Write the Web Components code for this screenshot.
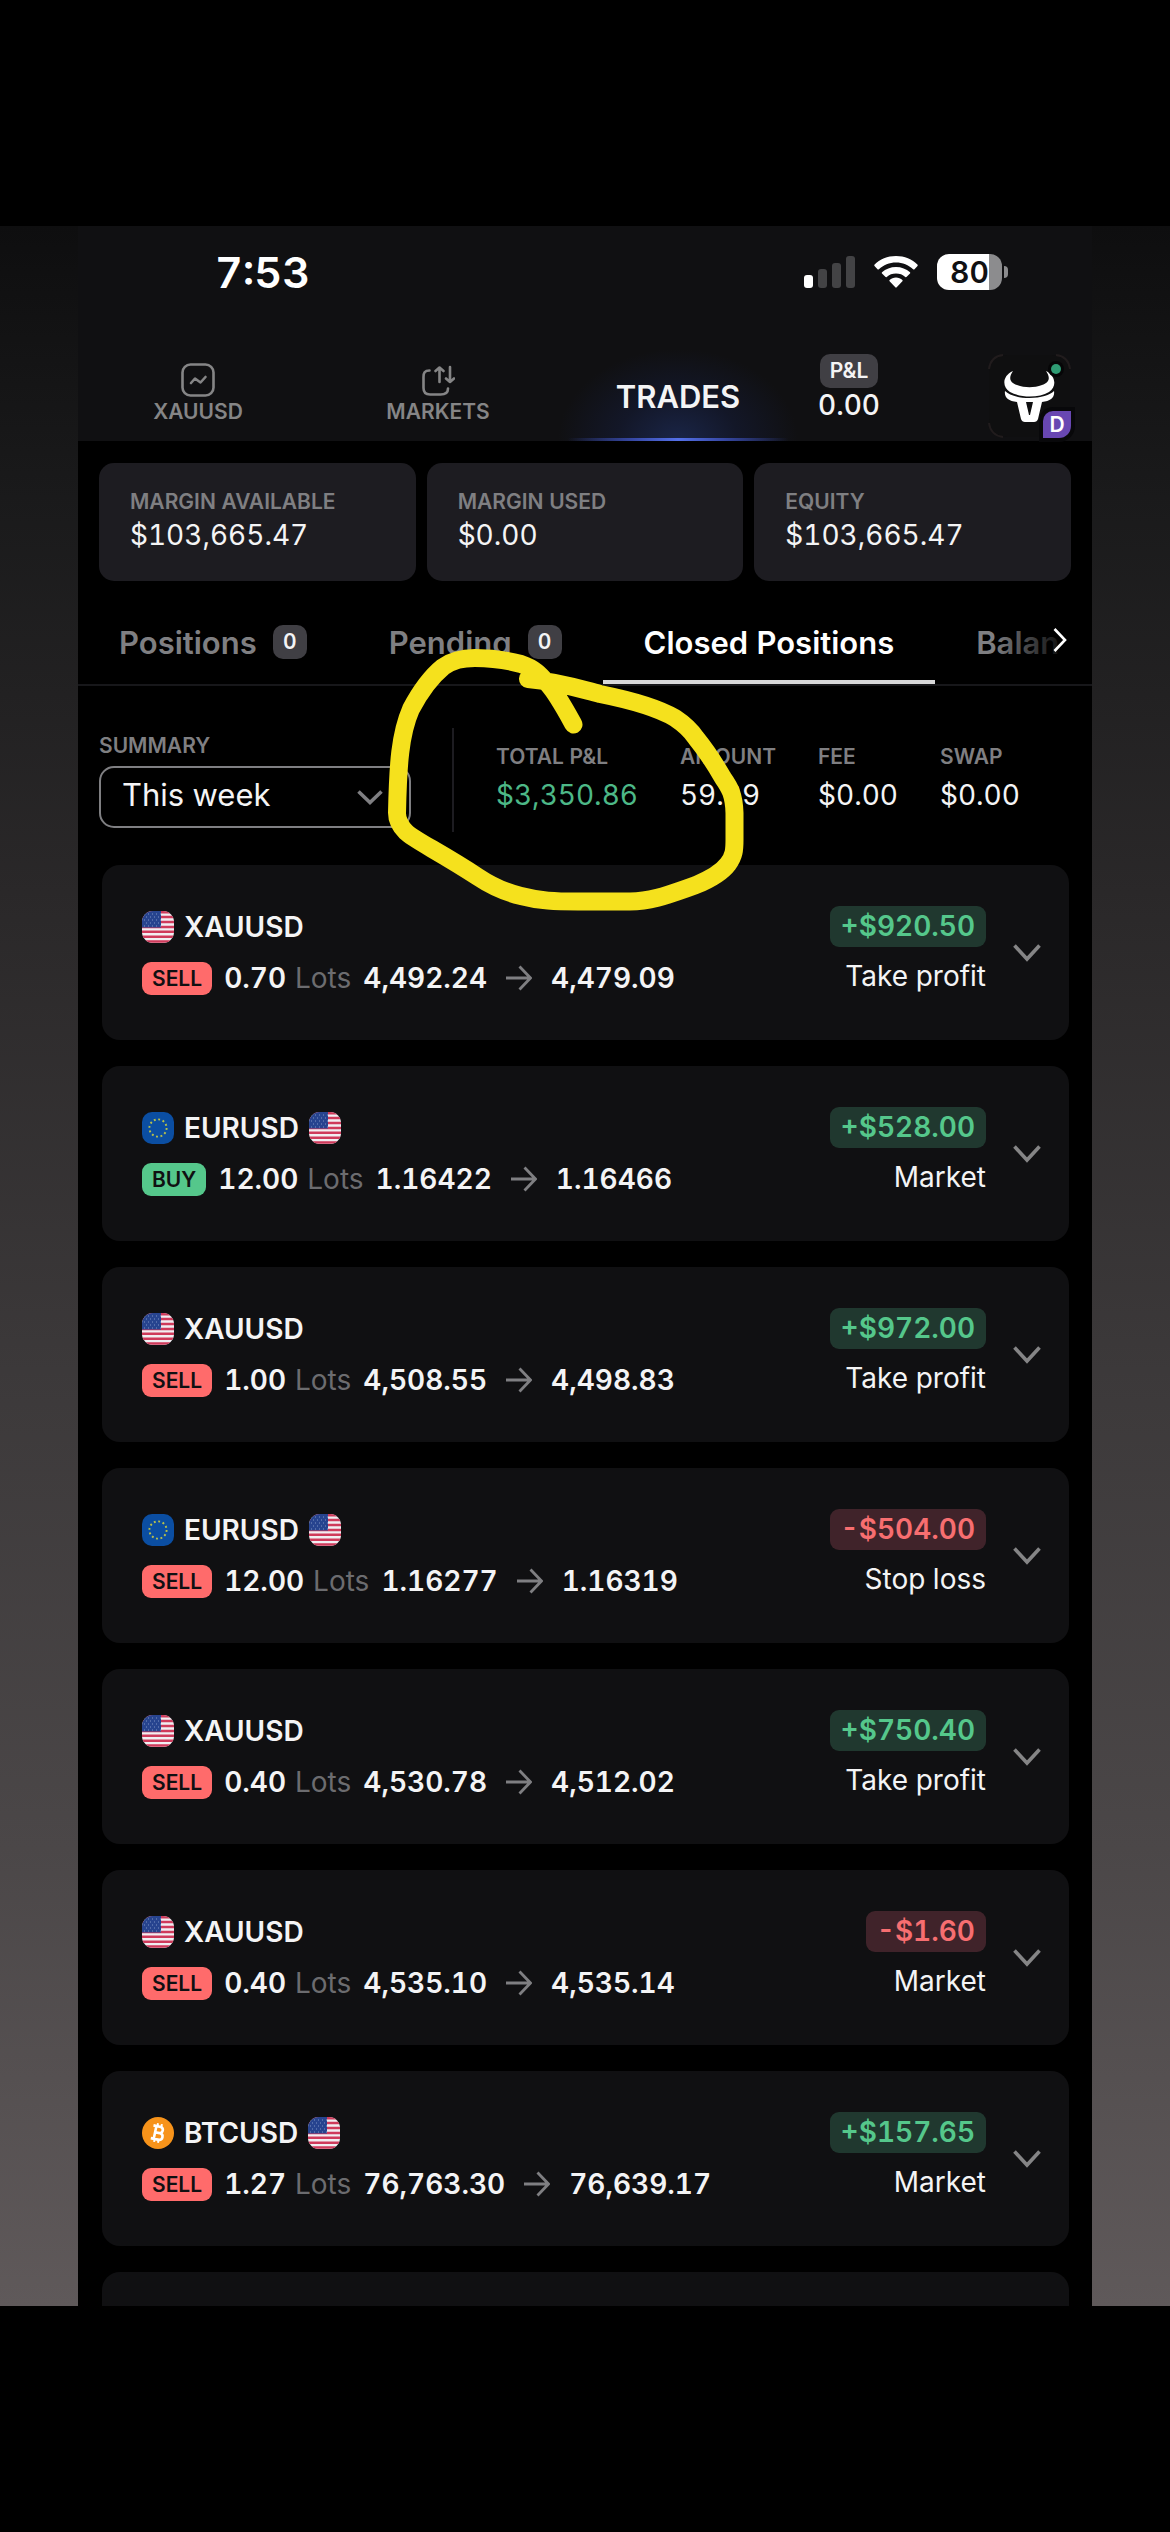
<!DOCTYPE html>
<html lang="en">
<head>
<meta charset="utf-8">
<meta name="viewport" content="width=device-width, initial-scale=1">
<title>Trades</title>
<style>
    body {
        margin: 0;
        background: #000;
        color: #f4f4f5;
        font-family: Inter, "Liberation Sans", sans-serif;
        font-variant-numeric: tabular-nums;
    }
</style>
</head>
<body>
<trades-screen>
    <status-bar slot="top" time="7:53" battery="80"></status-bar>
    <main-nav slot="top"></main-nav>

    <account-stats>
        <stat-item boxed label="MARGIN AVAILABLE">$103,665.47</stat-item>
        <stat-item boxed label="MARGIN USED">$0.00</stat-item>
        <stat-item boxed label="EQUITY">$103,665.47</stat-item>
    </account-stats>

    <tab-strip>
        <tab-item count="0">Positions</tab-item>
        <tab-item count="0">Pending</tab-item>
        <tab-item selected>Closed Positions</tab-item>
        <tab-item>Balan</tab-item>
    </tab-strip>

    <period-summary>
        <stat-item label="TOTAL P&amp;L" tone="up">$3,350.86</stat-item>
        <stat-item label="AMOUNT">59.89</stat-item>
        <stat-item label="FEE">$0.00</stat-item>
        <stat-item label="SWAP">$0.00</stat-item>
    </period-summary>

    <trade-list></trade-list>

    <pen-circle slot="overlay"></pen-circle>
</trades-screen>

<script>
const FLAGS = {
    us: `<svg viewBox="0 0 32 32">
            <clipPath id="c"><rect width="32" height="32" rx="11"/></clipPath>
            <g clip-path="url(#c)">
                <rect width="32" height="32" fill="#f1eef2"/>
                <path d="M0 1.2H32M0 6.1H32M0 11H32M0 15.9H32M0 20.8H32M0 25.7H32M0 30.6H32" stroke="#cf3a5b" stroke-width="2.5"/>
                <rect width="19" height="16.5" fill="#27448f"/>
                <path d="M2 3H19M4 6H19M2 9H19M4 12H19M2 15H19" stroke="#7f93c4" stroke-width="1" stroke-dasharray="1 3"/>
            </g>
        </svg>`,
    eu: `<svg viewBox="0 0 32 32">
            <rect width="32" height="32" rx="10" fill="#0b4ea2"/>
            <circle cx="16" cy="16" r="8.6" fill="none" stroke="#b9c24a" stroke-width="1.9" stroke-dasharray="1.9 2.6"/>
        </svg>`,
    btc: `<svg viewBox="0 0 32 32">
            <circle cx="16" cy="16" r="16" fill="#f7931a"/>
            <g transform="rotate(12 16 16)" fill="none" stroke="#fff" stroke-width="2.6">
                <path d="M10 9.5H17.5A3.2 3.2 0 0 1 17.5 15.8H13M13 15.8H18.4A3.4 3.4 0 0 1 18.4 22.5H10M13 9V23"/>
                <path d="M14 6.5V9.5M18 6.5V9.5M14 22.5V25.5M18 22.5V25.5" stroke-width="2"/>
            </g>
        </svg>`
};

const TRADES = [
    { from: "us", symbol: "XAUUSD", side: "SELL", lots: "0.70", open: "4,492.24", close: "4,479.09", pnl: "+$920.50", reason: "Take profit" },
    { from: "eu", symbol: "EURUSD", to: "us", side: "BUY", lots: "12.00", open: "1.16422", close: "1.16466", pnl: "+$528.00", reason: "Market" },
    { from: "us", symbol: "XAUUSD", side: "SELL", lots: "1.00", open: "4,508.55", close: "4,498.83", pnl: "+$972.00", reason: "Take profit" },
    { from: "eu", symbol: "EURUSD", to: "us", side: "SELL", lots: "12.00", open: "1.16277", close: "1.16319", pnl: "-$504.00", reason: "Stop loss" },
    { from: "us", symbol: "XAUUSD", side: "SELL", lots: "0.40", open: "4,530.78", close: "4,512.02", pnl: "+$750.40", reason: "Take profit" },
    { from: "us", symbol: "XAUUSD", side: "SELL", lots: "0.40", open: "4,535.10", close: "4,535.14", pnl: "-$1.60", reason: "Market" },
    { from: "btc", symbol: "BTCUSD", to: "us", side: "SELL", lots: "1.27", open: "76,763.30", close: "76,639.17", pnl: "+$157.65", reason: "Market" }
];

class TradesScreen extends HTMLElement {
    constructor() {
        super();
        this.attachShadow({ mode: "open" }).innerHTML = `
            <style>
                :host {
                    display: block;
                    box-sizing: border-box;
                    height: 100vh;
                    padding: 226px 0;
                    overflow: hidden;
                }
                .stage {
                    height: 100%;
                    box-sizing: border-box;
                    padding: 0 78px;
                    background: linear-gradient(#0e0e0f 0%, #1a1a1b 13%, #2a2829 32%, #3c393a 55%, #4b4748 78%, #5f595a 100%);
                }
                .app {
                    position: relative;
                    height: 100%;
                    background: #000;
                }
                .clip {
                    height: 100%;
                    overflow: hidden;
                }
                header {
                    background: #101012;
                }
            </style>
            <div class="stage">
                <div class="app">
                    <div class="clip">
                        <header><slot name="top"></slot></header>
                        <main><slot></slot></main>
                    </div>
                    <slot name="overlay"></slot>
                </div>
            </div>
        `;
    }
}

class StatusBar extends HTMLElement {
    constructor() {
        super();
        this.attachShadow({ mode: "open" }).innerHTML = `
            <style>
                :host {
                    display: flex;
                    justify-content: space-between;
                    align-items: center;
                    height: 92px;
                    padding: 0 84px 0 137px;
                }
                .time {
                    font-size: 43px;
                    font-weight: 600;
                    color: #fff;
                }
                .icons {
                    display: flex;
                    align-items: center;
                    gap: 19px;
                }
                svg {
                    display: block;
                }
                .battery {
                    display: flex;
                    align-items: center;
                    gap: 2px;
                }
                .level {
                    width: 65px;
                    height: 36px;
                    line-height: 37px;
                    border-radius: 12px;
                    background: linear-gradient(90deg, #fff 80%, #8c8c8e 80%);
                    color: #101012;
                    font-size: 30px;
                    font-weight: 600;
                    text-align: center;
                }
                .nub {
                    width: 4px;
                    height: 12px;
                    border-radius: 0 4px 4px 0;
                    background: #8c8c8e;
                }
            </style>
            <div class="time"></div>
            <div class="icons">
                <svg width="51" height="32" viewBox="0 0 51 32">
                    <rect y="19" width="9" height="13" rx="3" fill="#fff"/>
                    <g fill="#434345">
                        <rect x="14" y="13" width="9" height="19" rx="3"/>
                        <rect x="28" y="7" width="9" height="25" rx="3"/>
                        <rect x="42" width="9" height="32" rx="3"/>
                    </g>
                </svg>
                <svg width="44" height="32" viewBox="0 0 44 32" fill="#fff">
                    <path d="M22 0C13.500 0 5.800 3.400 0.400 8.700Q0 9.300 0.500 9.900L3.500 13.200Q4.200 13.800 4.900 13.200C9.400 9 15.400 6.500 22 6.500S34.600 9 39.100 13.200Q39.800 13.800 40.500 13.200L43.500 9.900Q44 9.300 43.600 8.700C38.200 3.400 30.500 0 22 0Z"/>
                    <path d="M22 11C16.600 11 11.700 13 8 16.300Q7.400 17 8 17.600L11.300 20.800Q12 21.400 12.700 20.900C15.200 18.700 18.400 17.500 22 17.500S28.800 18.700 31.300 20.900Q32 21.400 32.700 20.800L36 17.600Q36.600 17 36 16.300C32.300 13 27.400 11 22 11Z"/>
                    <path d="M22 21.500C19.500 21.500 17.300 22.400 15.600 23.900Q15 24.600 15.600 25.200L21.300 31.300Q22 32 22.700 31.300L28.400 25.200Q29 24.600 28.400 23.900C26.700 22.400 24.500 21.500 22 21.500Z"/>
                </svg>
                <div class="battery"><div class="level"></div><div class="nub"></div></div>
            </div>
        `;
    }

    connectedCallback() {
        this.shadowRoot.querySelector(".time").textContent = this.getAttribute("time");
        this.shadowRoot.querySelector(".level").textContent = this.getAttribute("battery");
    }
}

class MainNav extends HTMLElement {
    constructor() {
        super();
        this.attachShadow({ mode: "open" }).innerHTML = `
            <style>
                :host {
                    display: block;
                }
                nav {
                    display: grid;
                    grid-template-columns: 240fr 240fr 240fr 102fr 192fr;
                    height: 123px;
                }
                a {
                    display: flex;
                    flex-direction: column;
                    align-items: center;
                    justify-content: center;
                    gap: 3px;
                    padding-top: 27px;
                    color: #858586;
                    font-size: 21px;
                    line-height: 24px;
                    font-weight: 600;
                    text-decoration: none;
                }
                a svg {
                    display: block;
                }
                a.current {
                    padding-top: 34px;
                    color: #f4f4f5;
                    font-size: 31px;
                    background:
                        linear-gradient(90deg, transparent 4%, #3546a0 30%, #5470e8 50%, #3546a0 70%, transparent 96%) bottom / 100% 3px no-repeat,
                        radial-gradient(ellipse 50% 75% at 50% 100%, #1a2547 0%, #131728 50%, transparent 100%);
                }
                .pnl {
                    display: flex;
                    flex-direction: column;
                    align-items: center;
                    padding-top: 36px;
                    font-size: 28px;
                    line-height: 34px;
                    font-weight: 500;
                }
                .chip {
                    padding: 0 10px;
                    border-radius: 10px;
                    background: #403f44;
                    font-size: 21px;
                    line-height: 34px;
                    font-weight: 600;
                }
                button {
                    justify-self: end;
                    align-self: start;
                    margin: 36px 21px 0 0;
                    padding: 0;
                    border: 0;
                    background: none;
                    position: relative;
                    width: 83px;
                    height: 84px;
                    color: #fff;
                    font: inherit;
                }
                .kind {
                    position: absolute;
                    right: 0;
                    bottom: 0;
                    width: 28px;
                    border-radius: 10px 0 12px 0;
                    background: #6847b2;
                    box-shadow: 0 0 0 4px #08080a;
                    font-size: 21px;
                    line-height: 27px;
                    font-weight: 600;
                }
            </style>
            <nav>
                <a href="#chart">
                    <svg width="34" height="34" viewBox="0 0 34 34" fill="none" stroke="#858586" stroke-width="2.6" stroke-linecap="round" stroke-linejoin="round">
                        <rect x="1.500" y="1.500" width="31" height="31" rx="8"/>
                        <path d="M10 20L14 15.500L19.500 19.500L24.500 14"/>
                    </svg>
                    XAUUSD
                </a>
                <a href="#markets">
                    <svg width="34" height="34" viewBox="0 0 34 34" fill="none" stroke="#858586" stroke-width="2.600" stroke-linecap="round" stroke-linejoin="round">
                        <path d="M8.500 7.500C3.500 7.500 2.500 10 2.500 14V25C2.500 29.500 4.500 31.500 9 31.500H19.500C24.500 31.500 27 29.500 27 25.500"/>
                        <path d="M18.500 19V4.500M14.500 8L18.500 4.500L22.500 8M29 4V19M25 15.500L29 19L33 15.500"/>
                    </svg>
                    MARKETS
                </a>
                <a class="current" href="#trades" aria-current="page">TRADES</a>
                <div class="pnl"><span class="chip">P&amp;L</span><span>0.00</span></div>
                <button type="button" aria-label="Account">
                    <svg width="83" height="84" viewBox="0 0 83 84">
                        <rect x="1" y="1" width="81" height="82" rx="18" fill="#0f0f10"/>
                        <path d="M1 15C2 7 7 2 15 1M68 1C76 2 81 7 82 15M1 69C2 77 7 82 15 83" fill="none" stroke="#211c1d" stroke-width="2"/>
                        <path d="M25 17C14 22 14 33 22 38C33 44 51 44 61 38C69 33 68 22 58 17C63 24 61 29 54 31C46 34 37 34 29 31C22 29 20 24 25 17Z" fill="#fff"/>
                        <path d="M17 37C21 41 30 44 41.500 44C53 44 62 41 66 37C67 43 63 47 54 48L50 65Q49 68 46 68H37Q34 68 33 65L29 48C20 47 16 43 17 37Z" fill="#fff"/>
                        <path d="M38 48H45L42 61H41Z" fill="#0f0f10"/>
                        <circle cx="68" cy="15" r="8" fill="#060607"/>
                        <circle cx="68" cy="15" r="5" fill="#2f9c74"/>
                    </svg>
                    <span class="kind">D</span>
                </button>
            </nav>
        `;
    }
}

class AccountStats extends HTMLElement {
    constructor() {
        super();
        this.attachShadow({ mode: "open" }).innerHTML = `
            <style>
                :host {
                    display: grid;
                    grid-template-columns: repeat(3, 1fr);
                    gap: 11px;
                    padding: 22px 21px 0;
                }
            </style>
            <slot></slot>
        `;
    }
}

// label over value; the boxed variant is a filled card
class StatItem extends HTMLElement {
    constructor() {
        super();
        this.attachShadow({ mode: "open" }).innerHTML = `
            <style>
                :host {
                    display: block;
                    font-size: 28px;
                    line-height: 34px;
                }
                :host([boxed]) {
                    padding: 26px 31px 29px;
                    border-radius: 15px;
                    background: #1d1c21;
                }
                :host([tone="up"]) .value {
                    color: #4db887;
                }
                .label {
                    margin-bottom: 9px;
                    color: #7f7f82;
                    font-size: 21px;
                    line-height: 25px;
                    font-weight: 600;
                    white-space: nowrap;
                }
                :host([boxed]) .label {
                    margin-bottom: 4px;
                }
            </style>
            <div class="label"></div>
            <div class="value"><slot></slot></div>
        `;
    }

    connectedCallback() {
        this.shadowRoot.querySelector(".label").textContent = this.getAttribute("label");
    }
}

class TabStrip extends HTMLElement {
    constructor() {
        super();
        this.attachShadow({ mode: "open" }).innerHTML = `
            <style>
                :host {
                    display: flex;
                    position: relative;
                    height: 98px;
                    margin-top: 5px;
                    border-bottom: 2px solid #17171a;
                    overflow: hidden;
                }
                button {
                    position: absolute;
                    right: 0;
                    top: 0;
                    width: 110px;
                    height: 94px;
                    padding: 17px 25px 0 0;
                    border: 0;
                    background: linear-gradient(90deg, transparent 10%, #000 80%);
                    text-align: right;
                }
            </style>
            <slot></slot>
            <button type="button" aria-label="Next tabs">
                <svg width="14" height="24" viewBox="0 0 14 24" fill="none" stroke="#fff" stroke-width="2.600"><path d="M1.500 1L12 12L1.500 23"/></svg>
            </button>
        `;
    }
}

class TabItem extends HTMLElement {
    constructor() {
        super();
        this.attachShadow({ mode: "open" }).innerHTML = `
            <style>
                :host {
                    display: flex;
                    flex: none;
                }
                button {
                    display: flex;
                    align-items: center;
                    gap: 16px;
                    padding: 18px 41px 0;
                    border: 0;
                    border-bottom: 4px solid transparent;
                    background: none;
                    color: #7f7f82;
                    font: inherit;
                    font-size: 31px;
                    font-weight: 600;
                    white-space: nowrap;
                }
                :host([selected]) button {
                    border-color: #d8d8d9;
                    color: #fff;
                }
                .count {
                    width: 34px;
                    border-radius: 10px;
                    background: #403f44;
                    color: #f4f4f5;
                    font-size: 21px;
                    line-height: 34px;
                    text-align: center;
                }
            </style>
            <button type="button"><slot></slot></button>
        `;
    }

    connectedCallback() {
        if (this.hasAttribute("count")) {
            const count = document.createElement("span");
            count.className = "count";
            count.textContent = this.getAttribute("count");
            this.shadowRoot.querySelector("button").append(count);
        }
    }
}

class PeriodSummary extends HTMLElement {
    constructor() {
        super();
        this.attachShadow({ mode: "open" }).innerHTML = `
            <style>
                :host {
                    display: flex;
                    align-items: flex-start;
                    padding: 42px 0 33px 21px;
                }
                .period {
                    flex: 0 0 312px;
                    padding-top: 5px;
                }
                label {
                    display: block;
                    margin-bottom: 8px;
                    color: #7f7f82;
                    font-size: 21px;
                    line-height: 25px;
                    font-weight: 600;
                }
                .field {
                    display: grid;
                    align-items: center;
                }
                select, .field svg {
                    grid-area: 1 / 1;
                }
                .field svg {
                    justify-self: end;
                    margin-right: 28px;
                    pointer-events: none;
                }
                select {
                    appearance: none;
                    width: 100%;
                    height: 62px;
                    padding: 0 60px 5px 21px;
                    border: 2px solid #7f7f82;
                    border-radius: 15px;
                    background: #000;
                    color: #f4f4f5;
                    font: inherit;
                    font-size: 31px;
                }
                .figures {
                    display: flex;
                    gap: 42px;
                    margin-left: 41px;
                    padding: 16px 0 20px 42px;
                    border-left: 2px solid #1d1c21;
                }
            </style>
            <div class="period">
                <label for="period">SUMMARY</label>
                <div class="field">
                    <select id="period"><option>This week</option></select>
                    <svg width="26" height="15" viewBox="0 0 26 15" fill="none" stroke="#7f7f82" stroke-width="3.600"><path d="M1.500 1.500L13 12.500L24.500 1.500"/></svg>
                </div>
            </div>
            <div class="figures"><slot></slot></div>
        `;
    }
}

class TradeList extends HTMLElement {
    constructor() {
        super();
        this.attachShadow({ mode: "open" }).innerHTML = `
            <style>
                :host {
                    display: flex;
                    flex-direction: column;
                    gap: 26px;
                    padding: 0 23px 0 24px;
                }
            </style>
        `;
    }

    connectedCallback() {
        for (const trade of TRADES) {
            const card = document.createElement("trade-card");
            card.trade = trade;
            this.shadowRoot.append(card);
        }
        this.shadowRoot.append(document.createElement("trade-card"));
    }
}

class TradeCard extends HTMLElement {
    constructor() {
        super();
        this.attachShadow({ mode: "open" });
    }

    connectedCallback() {
        this.shadowRoot.innerHTML = `
            <style>
                :host {
                    display: flex;
                    flex: none;
                    align-items: flex-start;
                    box-sizing: border-box;
                    min-height: 175px;
                    padding: 41px 28px 42px 40px;
                    border-radius: 18px;
                    background: #101012;
                    font-size: 28px;
                    line-height: 34px;
                }
                svg {
                    display: block;
                }
                .info {
                    flex: 1;
                }
                .row {
                    display: flex;
                    align-items: center;
                    font-weight: 600;
                }
                .name {
                    gap: 10px;
                    height: 41px;
                }
                .name svg {
                    width: 32px;
                    height: 32px;
                }
                .deal {
                    gap: 12px;
                    height: 34px;
                    margin-top: 14px;
                }
                .side {
                    padding: 0 10px;
                    border-radius: 9px;
                    background: #ff6b6b;
                    color: #101012;
                    font-size: 21px;
                    line-height: 33px;
                }
                .side.buy {
                    background: #55c78b;
                }
                .lots {
                    display: flex;
                    gap: 9px;
                }
                .unit {
                    color: #6c6c6f;
                    font-weight: 400;
                }
                .arrow {
                    margin: 0 7px;
                }
                .result {
                    display: flex;
                    flex-direction: column;
                    align-items: flex-end;
                    gap: 12px;
                }
                .pnl {
                    padding: 0 11px;
                    border-radius: 9px;
                    background: #20382f;
                    color: #55c78b;
                    line-height: 41px;
                    font-weight: 600;
                }
                .pnl.loss {
                    background: #40232a;
                    color: #f76e70;
                }
                button {
                    margin: 38px 0 0 27px;
                    padding: 0;
                    border: 0;
                    background: none;
                }
            </style>
        `;
        const t = this.trade;
        if (!t) return;
        this.shadowRoot.innerHTML += `
            <div class="info">
                <div class="row name">${FLAGS[t.from]}<span>${t.symbol}</span>${t.to ? FLAGS[t.to] : ""}</div>
                <div class="row deal">
                    <span class="side ${t.side.toLowerCase()}">${t.side}</span>
                    <span class="lots"><span>${t.lots}</span><span class="unit">Lots</span></span>
                    <span>${t.open}</span>
                    <svg class="arrow" width="26" height="26" viewBox="0 0 26 26" fill="none" stroke="#7f7f82" stroke-width="2.800"><path d="M0 13H24M13.500 1.500L24.500 13L13.500 24.500"/></svg>
                    <span>${t.close}</span>
                </div>
            </div>
            <div class="result">
                <span class="pnl ${t.pnl[0] === "-" ? "loss" : ""}">${t.pnl}</span>
                <span>${t.reason}</span>
            </div>
            <button type="button" aria-label="Show details">
                <svg width="28" height="18" viewBox="0 0 28 18" fill="none" stroke="#858586" stroke-width="3.600"><path d="M1.500 1.500L14 15L26.500 1.500"/></svg>
            </button>
        `;
    }
}

// marker stroke drawn over the total
class PenCircle extends HTMLElement {
    constructor() {
        super();
        this.attachShadow({ mode: "open" }).innerHTML = `
            <style>
                :host {
                    position: absolute;
                    left: 312px;
                    top: 423px;
                    pointer-events: none;
                }
                svg {
                    display: block;
                    overflow: visible;
                }
            </style>
            <svg width="354" height="263" viewBox="390 649 354 263" fill="none" stroke="#f5e11d" stroke-width="18" stroke-linecap="round" stroke-linejoin="round">
                <path d="M573.500 724.500C565 709 557 694 548 684C541 676 536 669 521 664C506 660 490 658 475 658C462 658 453 660 443 667C432 676 420 692 411 709C400 734 398 765 397 813C397 820 400 826 406 832C414 840 440 852 478 877C490 885 504 892 521 896C540 901 555 901.500 578 901.500H630C652 901.500 670 894 696 885C713 878 722 872 728 864C734 856 734.500 850 734.500 840V813C734 795 730 788 723 778C715 764 709 754 696 738C690 729 684 724 675 718C658 708 630 700 600 694C580 689 560 682 528 679"/>
            </svg>
        `;
    }
}

customElements.define("trades-screen", TradesScreen);
customElements.define("status-bar", StatusBar);
customElements.define("main-nav", MainNav);
customElements.define("account-stats", AccountStats);
customElements.define("stat-item", StatItem);
customElements.define("tab-strip", TabStrip);
customElements.define("tab-item", TabItem);
customElements.define("period-summary", PeriodSummary);
customElements.define("trade-card", TradeCard);
customElements.define("trade-list", TradeList);
customElements.define("pen-circle", PenCircle);
</script>
</body>
</html>
